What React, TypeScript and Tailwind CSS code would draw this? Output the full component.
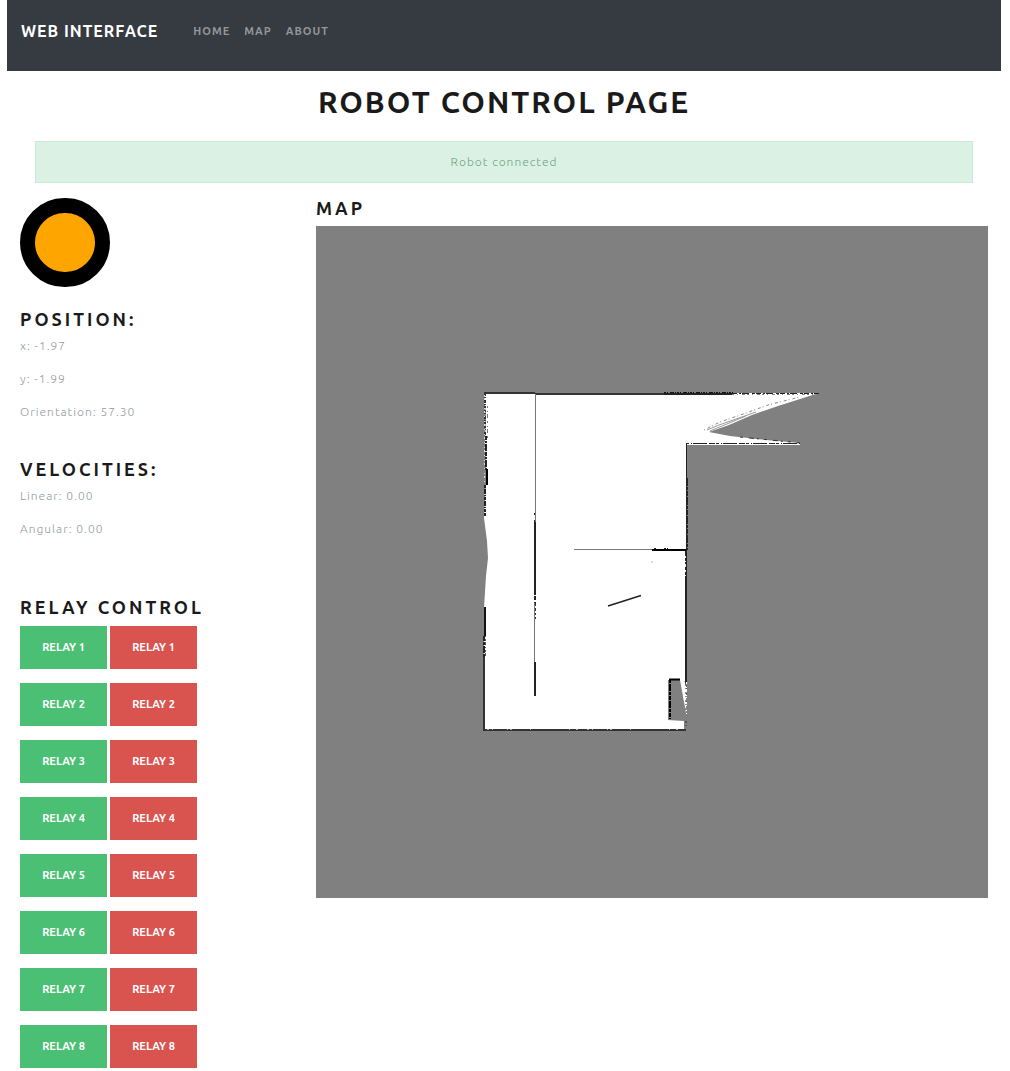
const relays = [1, 2, 3, 4, 5, 6, 7, 8];

const heading = "text-lg font-bold leading-5 tracking-[3px] text-[#1a1a1a] uppercase";
const reading = "text-xs font-light leading-5 tracking-[1px] text-[#919aa1]";
const relayButton =
  "h-[43px] w-[87px] text-[11px] font-bold uppercase text-white";

function OccupancyMap() {
  return (
    <svg
      viewBox="0 0 672 672"
      className="block aspect-square w-full bg-[#808080]"
      role="img"
      aria-label="Occupancy grid map"
    >
      {/* free space */}
      <path
        fill="#fff"
        d="M168 167H503L484 173L462 180L436 189L413 199L393 206L414 210L450 214L484 217V219H370V456L365 454H352V494L368 495V504H168V382L170 350L172 332L171 315L168 292V288L170 260V240L169 215L170 190Z"
      />
      <g fill="none" shapeRendering="crispEdges">
        {/* top wall */}
        <path stroke="#333" strokeWidth="2" d="M168 167H219" />
        <path stroke="#333" strokeWidth="2" d="M219 168H352" />
        <path stroke="#222" strokeWidth="2" d="M348 168H416" />
        <path stroke="#111" strokeWidth="1" strokeDasharray="2 1 1 2 4 1 1 1" d="M348 166.5H418" />
        <path stroke="#222" strokeWidth="1" strokeDasharray="5 2 2 1 7 3 3 1" d="M416 167.5H503" />
        <path stroke="#808080" strokeWidth="1" strokeDasharray="2 3 1 4 3 2" d="M416 168.5H500" />
        {/* left wall */}
        <path stroke="#333" strokeWidth="2" strokeDasharray="2 1 1 2 3 1 1 1 2 2" d="M169 168V210" />
        <path stroke="#ddd" strokeWidth="1" strokeDasharray="1 2 2 3 1 4" d="M168.5 169V290" />
        <path stroke="#777" strokeWidth="1" strokeDasharray="2 3 1 2 4 3" d="M171.5 180V212" />
        <path stroke="#222" strokeWidth="2" strokeDasharray="4 1 2 1 7 1" d="M170 210V244" />
        <path stroke="#000" strokeWidth="2" d="M171 243V259" />
        <path stroke="#222" strokeWidth="2" strokeDasharray="3 1 5 1 1 1" d="M169 259V290" />
        <path stroke="#111" strokeWidth="2" d="M169 381V410" />
        <path stroke="#222" strokeWidth="2" strokeDasharray="5 1 3 1 7 1" d="M168 410V432" />
        <path stroke="#555" strokeWidth="1" strokeDasharray="1 2 2 1 3 2" d="M169.5 410V432" />
        <path stroke="#333" strokeWidth="2" d="M168 431V505" />
        {/* bottom wall */}
        <path stroke="#333" strokeWidth="2" d="M167 504H370" />
        <path stroke="#aaa" strokeWidth="1" strokeDasharray="2 3 1 14 1 2 2 18 1 38 1 6 2 9" d="M171 503.5H370" />
        {/* inner partition */}
        <path stroke="#777" strokeWidth="1" d="M219.5 168V298" />
        <path stroke="#222" strokeWidth="1" strokeDasharray="2 5 2 2" d="M218.5 287V296" />
        <path stroke="#222" strokeWidth="2" d="M219 296V363" />
        <path stroke="#222" strokeWidth="2" strokeDasharray="6 1 4 2" d="M219 363V378" />
        <path stroke="#333" strokeWidth="1" strokeDasharray="2 2 3 2" d="M219.5 378V393" />
        <path stroke="#777" strokeWidth="1" d="M218.5 377V436" />
        <path stroke="#222" strokeWidth="2" d="M219 436V470" />
        {/* right walls */}
        <path stroke="#222" strokeWidth="1" d="M370.5 218V324" />
        <path stroke="#222" strokeWidth="2" strokeDasharray="8 1 3 1 5 1" d="M371 252V324" />
        <path stroke="#222" strokeWidth="2" d="M370 323V458" />
        <path stroke="#eee" strokeWidth="1" strokeDasharray="2 3 1 2 3 3" d="M369.5 330V352" />
        <path stroke="#222" strokeWidth="1" strokeDasharray="3 2 1 1 14 2 6 1" d="M370 217.5H484" />
        {/* shelf */}
        <path stroke="#777" strokeWidth="1" d="M258 323.5H337" />
        <path stroke="#000" strokeWidth="2" d="M336 324H370" />
        <path stroke="#222" strokeWidth="1" strokeDasharray="2 8 2 1 1 20" d="M338 322.5H370" />
        <path stroke="#ddd" strokeWidth="2" d="M335 336H337" />
      </g>
      {/* small alcove */}
      <path fill="#808080" d="M354 454H364L370 487V494L354 493Z" />
      <g fill="none">
        <path stroke="#000" strokeWidth="2" d="M353 453.5H364" />
        <path stroke="#000" strokeWidth="2" strokeDasharray="4 1 7 1 3 1" d="M354 453V493" />
        <path fill="#fff" d="M364 454L370 487V460L368 454Z" />
        <path stroke="#fff" strokeWidth="1" strokeDasharray="3 2 1 1 4 2" d="M370.5 456V488" />
        <path stroke="#222" strokeWidth="1" strokeDasharray="2 2 1 3" d="M370 458V484M370 495V503" />
        {/* wedge scan returns */}
        <path stroke="#999" strokeWidth="1" d="M391 204L403 199L420 193L440 186M394 205L430 190" />
        <path stroke="#888" strokeWidth="1" strokeDasharray="1 3 3 2" d="M388 204L404 196L430 187L452 179L484 171" />
        <path stroke="#333" strokeWidth="1" strokeDasharray="3 6 5 3 2 5" d="M424 211L484 217" />
        {/* free-standing obstacle */}
        <path stroke="#222" strokeWidth="1.5" d="M292 380L325 369.5" />
      </g>
    </svg>
  );
}

export default function App() {
  return (
    <div className="min-h-screen bg-white pr-[9px] pl-[7px] font-[Ubuntu,'Noto_Sans',sans-serif]">
      <nav className="flex h-[71px] items-start bg-[#363a41] px-3.5 pt-[19px] uppercase">
        <a href="#" className="mr-[35px] text-base font-bold leading-6 tracking-[1px] text-white">
          Web Interface
        </a>
        <div className="flex gap-3.5 text-[11px] font-bold leading-6 tracking-[1px] text-[#94979a]">
          <a href="#home">Home</a>
          <a href="#map">Map</a>
          <a href="#about">About</a>
        </div>
      </nav>

      <h1 className="mt-[11px] text-center text-3xl font-bold leading-10 tracking-[2px] text-[#1a1a1a] uppercase">
        Robot Control Page
      </h1>
      <div
        role="status"
        className="mx-7 mt-[19px] border border-[#c9ebd5] bg-[#dbf1e3] py-2.5 text-center text-xs font-light leading-5 tracking-[1px] text-[#6fa283]"
      >
        Robot connected
      </div>

      <main className="grid grid-cols-[296px_1fr] px-[13px] pt-[15px]">
        <div>
          <div className="h-[89px] w-[90px] rounded-full border-[15px] border-black bg-[#ffa500]" />

          <section className="mt-[22px]">
            <h2 className={heading}>Position:</h2>
            <div className="mt-[7px] grid gap-[13px]">
              <p className={reading}>x: -1.97</p>
              <p className={reading}>y: -1.99</p>
              <p className={reading}>Orientation: 57.30</p>
            </div>
          </section>

          <section className="mt-[37px]">
            <h2 className={heading}>Velocities:</h2>
            <div className="mt-[7px] grid gap-[13px]">
              <p className={reading}>Linear: 0.00</p>
              <p className={reading}>Angular: 0.00</p>
            </div>
          </section>

          <section className="mt-[58px]">
            <h2 className={heading}>Relay Control</h2>
            <div className="mt-[9px] grid gap-3.5">
              {relays.map((n) => (
                <div key={n} className="flex gap-[3px]">
                  <button type="button" aria-label={`Relay ${n} on`} className={`${relayButton} bg-[#4bbf73]`}>
                    Relay {n}
                  </button>
                  <button type="button" aria-label={`Relay ${n} off`} className={`${relayButton} bg-[#d9534f]`}>
                    Relay {n}
                  </button>
                </div>
              ))}
            </div>
          </section>
        </div>

        <section>
          <h2 className={heading}>Map</h2>
          <div className="mt-2">
            <OccupancyMap />
          </div>
        </section>
      </main>
    </div>
  );
}
